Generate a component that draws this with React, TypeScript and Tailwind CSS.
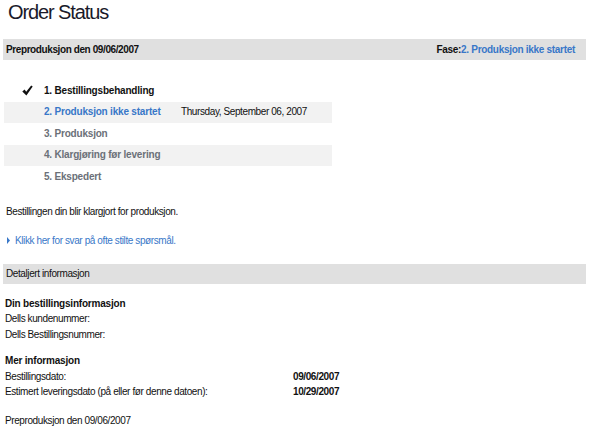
import { type FC } from 'react'

const font = { fontFamily: '"Liberation Sans", Arial, sans-serif' }

type Step = { label: string; tone: 'done' | 'current' | 'todo'; date?: string; shaded: boolean }

const steps: Step[] = [
  { label: '1. Bestillingsbehandling', tone: 'done', shaded: false },
  { label: '2. Produksjon ikke startet', tone: 'current', date: 'Thursday, September 06, 2007', shaded: true },
  { label: '3. Produksjon', tone: 'todo', shaded: false },
  { label: '4. Klargjøring før levering', tone: 'todo', shaded: true },
  { label: '5. Ekspedert', tone: 'todo', shaded: false },
]

const toneClass = {
  done: 'text-[#111]',
  current: 'text-[#3877c8]',
  todo: 'text-[#6b7078]',
}

const CheckMark: FC = () => (
  <svg width="11" height="11" viewBox="0 0 11 11">
    <path d="M0.3 6.4 L2.6 4.4 L4.2 6.8 L9.2 0.4 L10.7 1.5 L4.4 10.6 Z" fill="#111" />
  </svg>
)

const StepRow: FC<{ step: Step }> = ({ step }) => (
  <div className={`flex h-[21.5px] w-[328px] items-center ${step.shaded ? 'bg-[#f2f2f2]' : ''}`}>
    <div className="flex w-[40px] justify-end pr-[11px]">{step.tone === 'done' && <CheckMark />}</div>
    <span className={`w-[137px] font-bold tracking-[-0.2px] ${toneClass[step.tone]}`}>{step.label}</span>
    {step.date && <span className="text-[#111]">{step.date}</span>}
  </div>
)

const Bar: FC<{ children: React.ReactNode; className?: string }> = ({ children, className = '' }) => (
  <div className={`flex w-[583px] items-center justify-between bg-[#e0e0e0] px-[3px] ${className}`}>
    {children}
  </div>
)

export default function App() {
  return (
    <div
      className="min-h-[439px] w-[591px] bg-white pl-[3px] text-[10px] leading-[14px] tracking-[-0.4px] text-[#111]"
      style={font}
    >
      <h1 className="pl-[5px] text-[20px] leading-[24px] tracking-[-1.1px] text-[#1a1a2a]">Order Status</h1>

      <Bar className="mt-[15px] h-[21px]">
        <span className="font-bold tracking-[-0.4px]">Preproduksjon den 09/06/2007</span>
        <span className="pr-[8px] font-bold tracking-[-0.3px]">
          Fase:<span className="text-[#3877c8]">2. Produksjon ikke startet</span>
        </span>
      </Bar>

      <div className="mt-[20px] pl-[1px]">
        {steps.map((step) => (
          <StepRow key={step.label} step={step} />
        ))}
      </div>

      <p className="mt-[17px] pl-[3px]">Bestillingen din blir klargjort for produksjon.</p>

      <a className="mt-[15px] flex items-center pl-[4px] text-[#3877c8]">
        <svg width="3" height="7" viewBox="0 0 3 7" className="mr-[5px]">
          <path d="M0 0 L3 3.5 L0 7 Z" fill="#3877c8" />
        </svg>
        Klikk her for svar på ofte stilte spørsmål.
      </a>

      <Bar className="mt-[16px] h-[20px]">
        <span>Detaljert informasjon</span>
      </Bar>

      <div className="mt-[12px] pl-[2px] leading-[15.5px]">
        <p className="font-bold tracking-[-0.2px]">Din bestillingsinformasjon</p>
        <p>Dells kundenummer:</p>
        <p>Dells Bestillingsnummer:</p>

        <p className="mt-[11px] font-bold tracking-[-0.2px]">Mer informasjon</p>
        <div className="flex">
          <span className="w-[288px]">Bestillingsdato:</span>
          <span className="font-bold tracking-[-0.4px]">09/06/2007</span>
        </div>
        <div className="flex">
          <span className="w-[288px]">Estimert leveringsdato (på eller før denne datoen):</span>
          <span className="font-bold tracking-[-0.4px]">10/29/2007</span>
        </div>

        <p className="mt-[13px]">Preproduksjon den 09/06/2007</p>
      </div>
    </div>
  )
}
